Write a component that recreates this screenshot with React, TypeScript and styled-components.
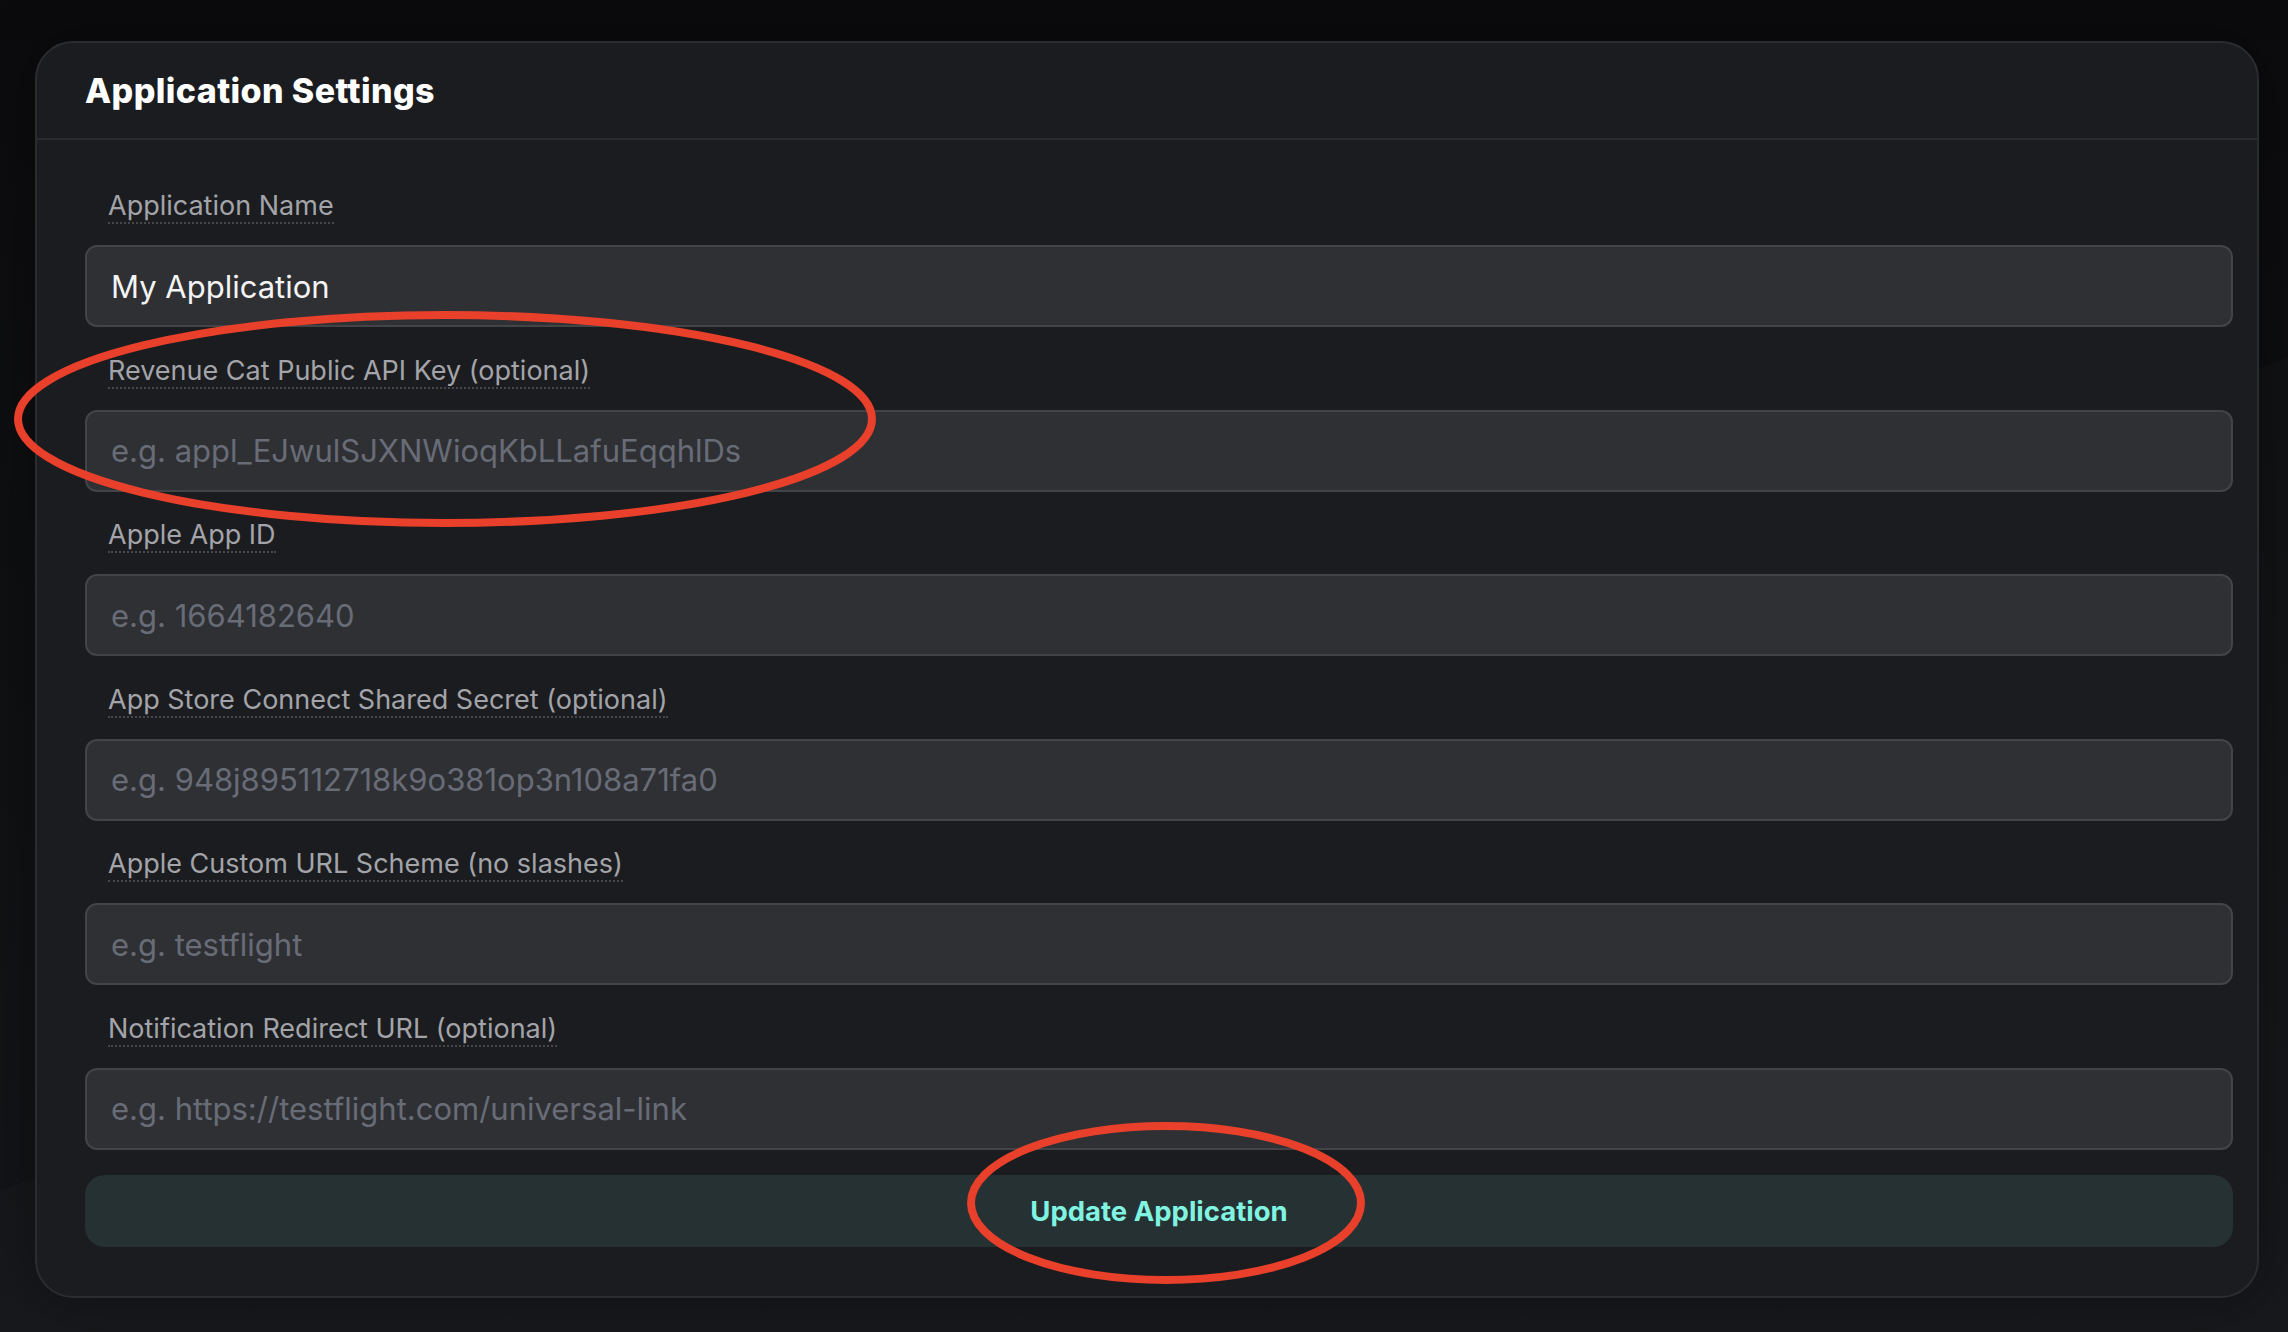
import styled, { createGlobalStyle } from "styled-components";

const GlobalStyle = createGlobalStyle`
  html, body {
    margin: 0;
    padding: 0;
  }
  body {
    width: 2288px;
    height: 1332px;
    overflow: hidden;
    background: #0e0f11;
    font-family: Inter, "Noto Sans", sans-serif;
  }
`;

const Page = styled.div`
  position: relative;
  box-sizing: border-box;
  width: 2288px;
  height: 1332px;
  padding: 41px 29px 0 35px;
  background:
    linear-gradient(160deg, transparent 55%, rgba(255, 255, 255, 0.015) 55%),
    linear-gradient(180deg, #0b0b0d 0%, #101113 55%, #141518 100%);
`;

const Card = styled.section`
  display: flex;
  flex-direction: column;
  border: 2px solid #2b2c30;
  border-radius: 38px;
  background: #1b1c1f;
  box-shadow: 0 0 60px rgba(0, 0, 0, 0.35);
  overflow: hidden;
`;

const CardHeader = styled.header`
  display: flex;
  align-items: center;
  height: 95px;
  padding-left: 48px;
  border-bottom: 2px solid #2a2b2f;
`;

const Title = styled.h1`
  margin: 0;
  font-size: 34px;
  font-weight: 800;
  color: #ffffff;
  letter-spacing: 0.4px;
`;

const Form = styled.form`
  display: flex;
  flex-direction: column;
  padding: 51px 24px 49px 48px;
`;

const Field = styled.div`
  display: flex;
  flex-direction: column;
  margin-bottom: 28.5px;

  &:last-of-type {
    margin-bottom: 25px;
  }
`;

const Label = styled.label`
  align-self: flex-start;
  box-sizing: border-box;
  height: 33px;
  margin: 0 0 21px 23px;
  line-height: 30px;
  font-size: 27px;
  color: #a3a4a9;
  border-bottom: 2px dotted #46474c;
`;

const Input = styled.input`
  box-sizing: border-box;
  height: 82px;
  padding: 0 24px;
  border: 2px solid #434448;
  border-radius: 12px;
  background: #2f3034;
  color: #f4f4f5;
  font-family: inherit;
  font-size: 31px;
  outline: none;

  &::placeholder {
    color: #686c77;
  }
`;

const SubmitButton = styled.button`
  height: 72px;
  border: none;
  border-radius: 20px;
  background: #263133;
  color: #80f4e1;
  font-family: inherit;
  font-size: 27.5px;
  font-weight: 700;
  cursor: pointer;
`;

const Annotations = styled.svg`
  position: absolute;
  inset: 0;
  pointer-events: none;
`;

const fields = [
  { label: "Application Name", value: "My Application", placeholder: "" },
  { label: "Revenue Cat Public API Key (optional)", placeholder: "e.g. appl_EJwulSJXNWioqKbLLafuEqqhlDs" },
  { label: "Apple App ID", placeholder: "e.g. 1664182640" },
  { label: "App Store Connect Shared Secret (optional)", placeholder: "e.g. 948j895112718k9o381op3n108a71fa0" },
  { label: "Apple Custom URL Scheme (no slashes)", placeholder: "e.g. testflight" },
  { label: "Notification Redirect URL (optional)", placeholder: "e.g. https://testflight.com/universal-link" },
];

export default function App() {
  return (
    <Page>
      <GlobalStyle />
      <Card>
        <CardHeader>
          <Title>Application Settings</Title>
        </CardHeader>
        <Form onSubmit={(e) => e.preventDefault()}>
          {fields.map((f) => (
            <Field key={f.label}>
              <Label>{f.label}</Label>
              <Input defaultValue={f.value} placeholder={f.placeholder} />
            </Field>
          ))}
          <SubmitButton type="submit">Update Application</SubmitButton>
        </Form>
      </Card>
      <Annotations width="2288" height="1332" viewBox="0 0 2288 1332">
        <ellipse cx="445" cy="419" rx="427" ry="104" fill="none" stroke="#e8402a" strokeWidth="8" />
        <ellipse cx="1166" cy="1203" rx="195" ry="77" fill="none" stroke="#e8402a" strokeWidth="8" />
      </Annotations>
    </Page>
  );
}
